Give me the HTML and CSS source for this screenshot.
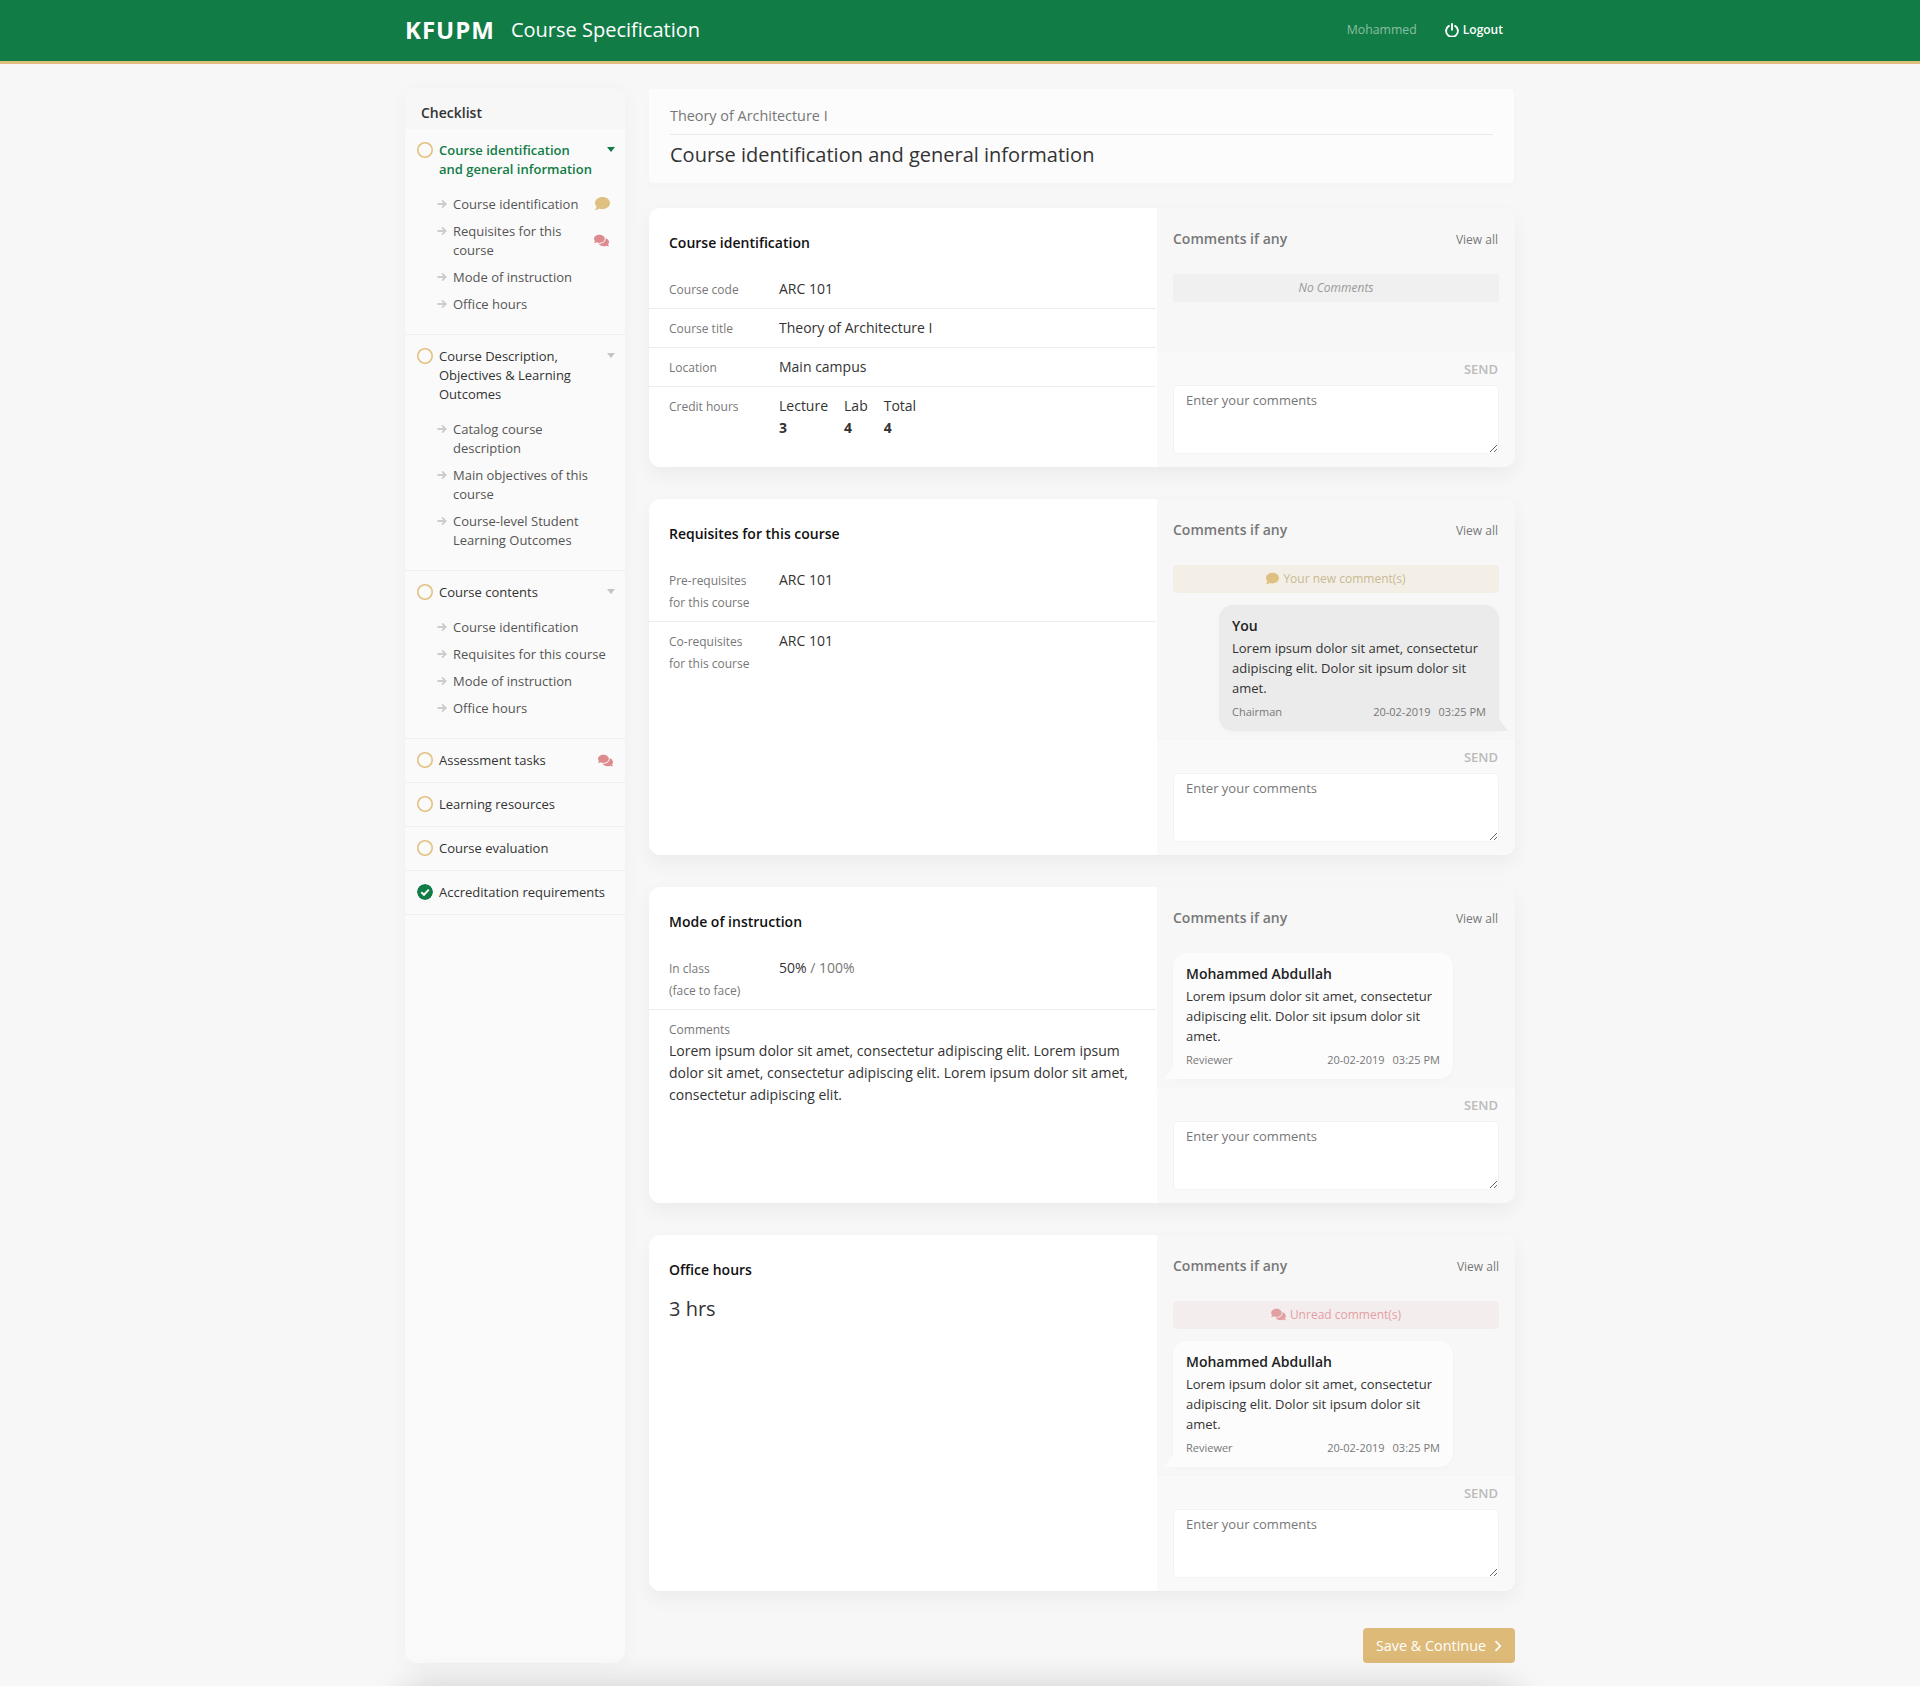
FILE: index.html
```html
<!DOCTYPE html>
<html lang="en">
<head>
<meta charset="utf-8">
<title>Course Specification</title>
<link rel="stylesheet" href="styles.css">
</head>
<body>
<svg class="defs" width="0" height="0" aria-hidden="true">
  <symbol id="i-comment" viewBox="0 0 512 512"><path fill="currentColor" d="M256 32C114.6 32 0 125.1 0 240c0 49.6 21.4 95 57 130.7C44.5 421.1 2.7 466 2.2 466.5c-2.2 2.3-2.8 5.7-1.5 8.7S4.8 480 8 480c66.3 0 116-31.8 140.6-51.4 32.7 12.3 69 19.4 107.4 19.4 141.4 0 256-93.1 256-208S397.4 32 256 32z"/></symbol>
  <symbol id="i-comments" viewBox="0 0 576 512"><path fill="currentColor" d="M416 192c0-88.4-93.1-160-208-160S0 103.6 0 192c0 34.3 14.1 65.9 38 92-13.4 30.2-35.5 54.2-35.8 54.5-2.2 2.3-2.8 5.7-1.5 8.7S4.8 352 8 352c36.6 0 66.9-12.3 88.7-25 32.2 15.7 70.3 25 111.3 25 114.9 0 208-71.6 208-160zm122 220c23.9-26 38-57.7 38-92 0-66.9-53.5-124.2-129.3-148.1.9 6.6 1.3 13.3 1.3 20.1 0 105.9-107.7 192-240 192-10.8 0-21.3-.8-31.7-1.9C207.8 439.6 281.8 480 368 480c41 0 79.1-9.2 111.3-25 21.8 12.7 52.1 25 88.7 25 3.2 0 6.1-1.9 7.3-4.8 1.3-2.9.7-6.3-1.5-8.7-.3-.3-22.4-24.2-35.8-54.5z"/></symbol>
  <symbol id="i-arrow" viewBox="0 0 10 10"><path fill="none" stroke="currentColor" stroke-width="1.8" d="M0.5 5H8.6M5 1.3L8.8 5L5 8.7"/></symbol>
  <symbol id="i-check" viewBox="0 0 16 16"><circle cx="8" cy="8" r="8" fill="#117c45"/><path fill="none" stroke="#fff" stroke-width="2" d="M4.3 8.2L7 10.8L11.8 5.6"/></symbol>
  <symbol id="i-power" viewBox="0 0 14 14"><path fill="none" stroke="currentColor" stroke-width="1.9" stroke-linecap="round" d="M3.9 2.9a5.9 5.9 0 1 0 6.2 0M7 1v5.8"/></symbol>
  <symbol id="i-chevron" viewBox="0 0 8 12"><path fill="none" stroke="currentColor" stroke-width="1.7" d="M1.5 1.2L6.2 6L1.5 10.8"/></symbol>
</svg>

<header class="topbar">
  <div class="topbar-inner">
    <span class="brand">KFUPM</span>
    <span class="app-title">Course Specification</span>
    <span class="user-name">Mohammed</span>
    <a class="logout"><svg class="icon-power"><use href="#i-power"/></svg>Logout</a>
  </div>
</header>

<div class="layout">
  <aside class="sidebar">
    <h2 class="sidebar-title">Checklist</h2>

    <section class="check-item">
      <div class="check-head has-caret active">
        <span class="status"></span>
        <span class="check-label">Course identification and general information</span>
        <span class="caret caret-green"></span>
      </div>
      <ul class="sub-list">
        <li class="sub-item"><svg class="sub-arrow"><use href="#i-arrow"/></svg><span class="sub-label">Course identification</span><svg class="note note-gold"><use href="#i-comment"/></svg></li>
        <li class="sub-item"><svg class="sub-arrow"><use href="#i-arrow"/></svg><span class="sub-label">Requisites for this course</span><svg class="note note-red"><use href="#i-comments"/></svg></li>
        <li class="sub-item"><svg class="sub-arrow"><use href="#i-arrow"/></svg><span class="sub-label">Mode of instruction</span></li>
        <li class="sub-item"><svg class="sub-arrow"><use href="#i-arrow"/></svg><span class="sub-label">Office hours</span></li>
      </ul>
    </section>

    <section class="check-item">
      <div class="check-head has-caret">
        <span class="status"></span>
        <span class="check-label">Course Description, Objectives &amp; Learning Outcomes</span>
        <span class="caret"></span>
      </div>
      <ul class="sub-list">
        <li class="sub-item"><svg class="sub-arrow"><use href="#i-arrow"/></svg><span class="sub-label">Catalog course description</span></li>
        <li class="sub-item"><svg class="sub-arrow"><use href="#i-arrow"/></svg><span class="sub-label">Main objectives of this course</span></li>
        <li class="sub-item"><svg class="sub-arrow"><use href="#i-arrow"/></svg><span class="sub-label">Course-level Student Learning Outcomes</span></li>
      </ul>
    </section>

    <section class="check-item">
      <div class="check-head has-caret">
        <span class="status"></span>
        <span class="check-label">Course contents</span>
        <span class="caret"></span>
      </div>
      <ul class="sub-list">
        <li class="sub-item"><svg class="sub-arrow"><use href="#i-arrow"/></svg><span class="sub-label">Course identification</span></li>
        <li class="sub-item"><svg class="sub-arrow"><use href="#i-arrow"/></svg><span class="sub-label">Requisites for this course</span></li>
        <li class="sub-item"><svg class="sub-arrow"><use href="#i-arrow"/></svg><span class="sub-label">Mode of instruction</span></li>
        <li class="sub-item"><svg class="sub-arrow"><use href="#i-arrow"/></svg><span class="sub-label">Office hours</span></li>
      </ul>
    </section>

    <section class="check-item">
      <div class="check-head">
        <span class="status"></span>
        <span class="check-label">Assessment tasks</span>
        <svg class="note note-red"><use href="#i-comments"/></svg>
      </div>
    </section>
    <section class="check-item">
      <div class="check-head"><span class="status"></span><span class="check-label">Learning resources</span></div>
    </section>
    <section class="check-item">
      <div class="check-head"><span class="status"></span><span class="check-label">Course evaluation</span></div>
    </section>
    <section class="check-item">
      <div class="check-head"><svg class="status-done"><use href="#i-check"/></svg><span class="check-label">Accreditation requirements</span></div>
    </section>
  </aside>

  <main class="main">
    <div class="title-card">
      <p class="course-name">Theory of Architecture I</p>
      <h1 class="page-title">Course identification and general information</h1>
    </div>

    <section class="card">
      <div class="card-left">
        <h3 class="card-title">Course identification</h3>
        <div class="row"><span class="row-label">Course code</span><span class="row-value">ARC 101</span></div>
        <div class="row"><span class="row-label">Course title</span><span class="row-value">Theory of Architecture I</span></div>
        <div class="row"><span class="row-label">Location</span><span class="row-value">Main campus</span></div>
        <div class="row row-last">
          <span class="row-label">Credit hours</span>
          <div class="credits">
            <div class="credit"><span>Lecture</span><b>3</b></div>
            <div class="credit"><span>Lab</span><b>4</b></div>
            <div class="credit"><span>Total</span><b>4</b></div>
          </div>
        </div>
      </div>
      <div class="card-right">
        <div class="thread">
          <div class="thread-head"><span class="thread-title">Comments if any</span><a class="view-all">View all</a></div>
          <div class="notice notice-empty">No Comments</div>
        </div>
        <div class="composer">
          <div class="send">SEND</div>
          <textarea class="comment-box" placeholder="Enter your comments"></textarea>
        </div>
      </div>
    </section>

    <section class="card">
      <div class="card-left">
        <h3 class="card-title">Requisites for this course</h3>
        <div class="row"><span class="row-label">Pre-requisites<br>for this course</span><span class="row-value">ARC 101</span></div>
        <div class="row row-last"><span class="row-label">Co-requisites<br>for this course</span><span class="row-value">ARC 101</span></div>
      </div>
      <div class="card-right">
        <div class="thread">
          <div class="thread-head"><span class="thread-title">Comments if any</span><a class="view-all">View all</a></div>
          <div class="notice notice-new"><svg class="notice-icon"><use href="#i-comment"/></svg>Your new comment(s)</div>
          <article class="bubble bubble-own">
            <div class="bubble-name">You</div>
            <p class="bubble-text">Lorem ipsum dolor sit amet, consectetur adipiscing elit. Dolor sit ipsum dolor sit amet.</p>
            <div class="bubble-meta"><span>Chairman</span><span class="bubble-time"><span>20-02-2019</span><span>03:25 PM</span></span></div>
          </article>
        </div>
        <div class="composer">
          <div class="send">SEND</div>
          <textarea class="comment-box" placeholder="Enter your comments"></textarea>
        </div>
      </div>
    </section>

    <section class="card">
      <div class="card-left">
        <h3 class="card-title">Mode of instruction</h3>
        <div class="row"><span class="row-label">In class<br>(face to face)</span><span class="row-value">50% <span class="muted">/ 100%</span></span></div>
        <div class="row row-last row-stack">
          <span class="row-label">Comments</span>
          <p class="row-text">Lorem ipsum dolor sit amet, consectetur adipiscing elit. Lorem ipsum dolor sit amet, consectetur adipiscing elit. Lorem ipsum dolor sit amet, consectetur adipiscing elit.</p>
        </div>
      </div>
      <div class="card-right">
        <div class="thread">
          <div class="thread-head"><span class="thread-title">Comments if any</span><a class="view-all">View all</a></div>
          <article class="bubble bubble-other">
            <div class="bubble-name">Mohammed Abdullah</div>
            <p class="bubble-text">Lorem ipsum dolor sit amet, consectetur adipiscing elit. Dolor sit ipsum dolor sit amet.</p>
            <div class="bubble-meta"><span>Reviewer</span><span class="bubble-time"><span>20-02-2019</span><span>03:25 PM</span></span></div>
          </article>
        </div>
        <div class="composer">
          <div class="send">SEND</div>
          <textarea class="comment-box" placeholder="Enter your comments"></textarea>
        </div>
      </div>
    </section>

    <section class="card">
      <div class="card-left">
        <h3 class="card-title card-title-compact">Office hours</h3>
        <div class="big-value">3 hrs</div>
      </div>
      <div class="card-right">
        <div class="thread">
          <div class="thread-head"><span class="thread-title">Comments if any</span><a class="view-all view-all-wide">View all</a></div>
          <div class="notice notice-unread"><svg class="notice-icon notice-icon-wide"><use href="#i-comments"/></svg>Unread comment(s)</div>
          <article class="bubble bubble-other">
            <div class="bubble-name">Mohammed Abdullah</div>
            <p class="bubble-text">Lorem ipsum dolor sit amet, consectetur adipiscing elit. Dolor sit ipsum dolor sit amet.</p>
            <div class="bubble-meta"><span>Reviewer</span><span class="bubble-time"><span>20-02-2019</span><span>03:25 PM</span></span></div>
          </article>
        </div>
        <div class="composer">
          <div class="send">SEND</div>
          <textarea class="comment-box" placeholder="Enter your comments"></textarea>
        </div>
      </div>
    </section>

    <div class="actions">
      <button class="save-btn" type="button">Save &amp; Continue<svg class="icon-chevron"><use href="#i-chevron"/></svg></button>
    </div>
  </main>
</div>
<div class="page-foot"></div>
</body>
</html>
```
FILE: styles.css
```css
* { box-sizing: border-box; }
html, body { margin: 0; padding: 0; height: 1686px; overflow: hidden; }
body {
  position: relative;
  background: #f7f7f7;
  font-family: "Open Sans", "Noto Sans", sans-serif;
  font-size: 14px;
  color: #333;
}
.defs { position: absolute; }

.topbar {
  height: 64px;
  background: #117c45;
  border-bottom: 3px solid #dfbe7b;
}
.topbar-inner {
  width: 1110px;
  height: 61px;
  margin: 0 auto;
  padding-bottom: 2px;
  display: flex;
  align-items: center;
  color: #fff;
}
.brand { font-size: 24px; font-weight: 700; letter-spacing: 1px; margin-right: 16px; }
.app-title { font-size: 20px; flex: 1; }
.user-name { font-size: 12.3px; color: rgba(255,255,255,.5); margin-right: 28px; }
.logout { display: flex; align-items: center; font-size: 12px; font-weight: 600; margin-right: 12px; }
.icon-power { width: 14px; height: 14px; margin-right: 4px; }

.layout {
  width: 1110px;
  margin: 24px auto 0;
  display: flex;
  gap: 24px;
  align-items: stretch;
}

.sidebar {
  width: 220px;
  height: 1575px;
  background: #fafafa;
  border-radius: 12px;
  box-shadow: 0 2px 20px rgba(0,0,0,.035);
  overflow: hidden;
}
.sidebar-title {
  margin: 0;
  height: 41px;
  padding: 15px 16px 0;
  background: #f7f7f7;
  font-size: 14px;
  line-height: 20px;
  font-weight: 600;
}
.check-item { padding: 12px 0; border-bottom: 1px solid #f0f0f0; }
.check-head {
  display: flex;
  align-items: flex-start;
  padding: 0 12px;
  font-size: 13px;
  line-height: 19px;
  color: #333;
  position: relative;
}
.check-head.has-caret { padding-right: 28px; }
.check-head.active { color: #117c45; font-weight: 600; }
.status, .status-done {
  flex: none;
  width: 16px;
  height: 16px;
  margin: 1px 6px 0 0;
  border-radius: 50%;
}
.status { box-shadow: inset 0 0 0 1.6px #e3c17f; }
.check-label { flex: 1; }
.caret {
  position: absolute;
  right: 10px;
  top: 0;
  width: 0;
  height: 0;
  border-left: 4.5px solid transparent;
  border-right: 4.5px solid transparent;
  border-top: 5px solid #c4c4c4;
  margin-top: 6px;
}
.caret-green { border-top-color: #117c45; }

.sub-list { list-style: none; margin: 16px 0 0; padding: 0 15px 0 32px; }
.sub-item {
  display: flex;
  align-items: flex-start;
  font-size: 13px;
  line-height: 19px;
  color: #555;
  padding-bottom: 8px;
}
.sub-arrow { flex: none; width: 10px; height: 10px; margin: 4px 6px 0 0; color: #ccc; }
.sub-label { flex: 1; }
.note { flex: none; margin-left: 8px; }
.note-gold { width: 15px; height: 15px; color: #dfc083; margin-top: 1px; }
.note-red { width: 15px; height: 15px; color: #de8b8f; align-self: center; }
.sub-item .note-red { margin: 0 1px 2px 8px; }

.main { width: 866px; padding-top: 1px; }
.title-card {
  height: 94px;
  width: 865px;
  padding: 16px 21px 0;
  background: #fcfcfc;
  border-radius: 4px;
  box-shadow: 0 4px 12px rgba(0,0,0,.015);
  margin-bottom: 25px;
}
.course-name {
  margin: 0;
  height: 30px;
  font-size: 14.4px;
  line-height: 22px;
  color: #777;
  border-bottom: 1px solid #e9e9e9;
}
.page-title { margin: 5px 0 0; font-size: 20px; line-height: 30px; font-weight: 400; color: #333; }

.card {
  display: flex;
  border-radius: 12px;
  background: #fff;
  box-shadow: 0 8px 20px rgba(0,0,0,.05);
  margin-bottom: 32px;
  overflow: hidden;
}
.card-left {
  width: 508px;
  flex: none;
  background: #fff;
  padding-bottom: 20px;
}
.card-title {
  margin: 0;
  padding: 24px 20px 0;
  height: 62px;
  font-size: 14px;
  line-height: 22px;
  font-weight: 600;
  color: #111;
}
.card-title-compact { height: 59px; }
.row {
  display: flex;
  padding: 8px 20px;
  margin-right: 1px;
  border-bottom: 1px solid #ededed;
  line-height: 22px;
}
.row-last { border-bottom: 0; }
.row-label { width: 110px; flex: none; margin: 1px 0 -1px; font-size: 12px; color: #777; }
.row-value { font-size: 14px; color: #333; }
.muted { color: #777; }
.credits { display: flex; gap: 16px; }
.credit { display: flex; flex-direction: column; }
.credit b { font-weight: 700; }
.row-stack { display: block; }
.row-stack .row-label { display: block; width: auto; }
.row-text { margin: 0; font-size: 14px; line-height: 22px; width: 470px; }
.big-value { padding: 0 20px; font-size: 20px; line-height: 30px; color: #333; }

.card-right {
  flex: 1;
  display: flex;
  flex-direction: column;
  background: #f7f7f7;
}
.thread { flex: 1; padding: 19px 16px 9px; }
.thread-head {
  display: flex;
  justify-content: space-between;
  align-items: center;
  height: 22px;
  padding-right: 1px;
  margin-bottom: 25px;
}
.thread-title { font-size: 14px; font-weight: 600; color: #777; }
.view-all { font-size: 12px; color: #777; margin-top: 3px; }
.view-all-wide { margin-right: -1px; }
.notice {
  height: 28px;
  padding-bottom: 1px;
  border-radius: 4px;
  display: flex;
  align-items: center;
  justify-content: center;
  font-size: 12px;
  margin-bottom: 12px;
}
.notice-empty { background: #f0f0f0; color: #999; font-style: italic; }
.notice-new { background: #f3efe7; color: #c8b993; }
.notice-unread { background: #f4edee; color: #e3a0a2; }
.notice-icon { width: 13px; height: 13px; margin-right: 4px; color: #dfc083; }
.notice-icon-wide { width: 15px; color: #e2a0a2; }

.bubble {
  position: relative;
  padding: 11px 13px 10px 13px;
  border-radius: 14px;
  box-shadow: 0 2px 6px rgba(0,0,0,.02);
}
.bubble-own { margin-left: 46px; background: #ebebeb; border-bottom-right-radius: 0; }
.bubble-other { width: 280px; background: #fcfcfc; border-bottom-left-radius: 0; }
.bubble-own::after, .bubble-other::after {
  content: "";
  position: absolute;
  bottom: 0;
  width: 9px;
  height: 12px;
}
.bubble-own::after { left: 100%; background: #ebebeb; clip-path: polygon(0 0, 100% 100%, 0 100%); }
.bubble-other::after { right: 100%; background: #fcfcfc; clip-path: polygon(100% 0, 100% 100%, 0 100%); }
.bubble-name { font-size: 14px; line-height: 20px; font-weight: 600; color: #222; }
.bubble-text { margin: 2px 0 0; font-size: 13px; line-height: 20px; color: #333; }
.bubble-meta {
  display: flex;
  justify-content: space-between;
  margin-top: 5px;
  font-size: 11px;
  line-height: 18px;
  color: #777;
}
.bubble-time { display: flex; gap: 8px; }

.composer { height: 115px; padding: 6px 16px 0; background: #f9f9f9; border-top: 1px solid #fbfbfb; }
.send { height: 26px; line-height: 20px; text-align: right; font-size: 13px; font-weight: 600; color: #bbb; padding-right: 1px; }
.comment-box {
  display: block;
  width: 100%;
  height: 69px;
  padding: 5px 12px;
  border: 1px solid #f2f2f2;
  border-radius: 4px;
  background: #fff;
  font-family: inherit;
  font-size: 13px;
  line-height: 19px;
  color: #333;
  resize: vertical;
  outline: none;
}
.comment-box::placeholder { color: #777; opacity: 1; }

.actions { display: flex; justify-content: flex-end; margin-top: 37px; }
.save-btn {
  width: 152px;
  height: 35px;
  border: 0;
  border-radius: 4px;
  background: #deba78;
  color: #fff;
  font-family: inherit;
  font-size: 14.4px;
  display: flex;
  align-items: center;
  justify-content: center;
  gap: 8px;
}
.icon-chevron { width: 8px; height: 12px; }

.page-foot {
  position: absolute;
  left: 405px;
  top: 1686px;
  width: 1110px;
  height: 40px;
  box-shadow: 0 0 34px rgba(0,0,0,.16);
}
```
